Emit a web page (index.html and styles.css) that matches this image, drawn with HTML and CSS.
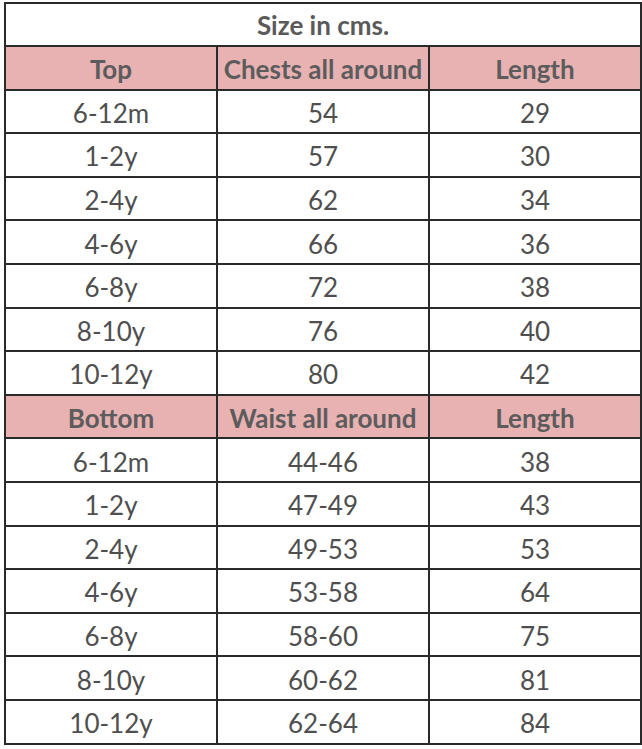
FILE: index.html
```html
<!DOCTYPE html>
<html>
<head>
<meta charset="utf-8">
<link rel="stylesheet" href="styles.css">
</head>
<body>
<table class="size-table">
  <tr class="title-row"><td colspan="3">Size in cms.</td></tr>
  <tr class="head-row"><td>Top</td><td>Chests all around</td><td>Length</td></tr>
  <tr><td>6-12m</td><td>54</td><td>29</td></tr>
  <tr><td>1-2y</td><td>57</td><td>30</td></tr>
  <tr><td>2-4y</td><td>62</td><td>34</td></tr>
  <tr><td>4-6y</td><td>66</td><td>36</td></tr>
  <tr><td>6-8y</td><td>72</td><td>38</td></tr>
  <tr><td>8-10y</td><td>76</td><td>40</td></tr>
  <tr><td>10-12y</td><td>80</td><td>42</td></tr>
  <tr class="head-row"><td>Bottom</td><td>Waist all around</td><td>Length</td></tr>
  <tr><td>6-12m</td><td>44-46</td><td>38</td></tr>
  <tr><td>1-2y</td><td>47-49</td><td>43</td></tr>
  <tr><td>2-4y</td><td>49-53</td><td>53</td></tr>
  <tr><td>4-6y</td><td>53-58</td><td>64</td></tr>
  <tr><td>6-8y</td><td>58-60</td><td>75</td></tr>
  <tr><td>8-10y</td><td>60-62</td><td>81</td></tr>
  <tr><td>10-12y</td><td>62-64</td><td>84</td></tr>
</table>
</body>
</html>
```
FILE: styles.css
```css
html, body {
  margin: 0;
  background: #ffffff;
}
body {
  padding: 2px 0 0 4px;
}
.size-table {
  border-collapse: collapse;
  table-layout: fixed;
  width: 638px;
  font-family: Lato, "Liberation Sans", sans-serif;
  font-size: 26px;
  color: #4f4f4f;
}
.size-table td {
  border: 2px solid #2a2a2a;
  height: 38.6px;
  padding: 3px 0 0 0;
  text-align: center;
  vertical-align: middle;
  width: 33.333%;
  line-height: 1;
}
.title-row td {
  font-weight: bold;
  color: #5a5a5a;
  height: 41px;
  padding-top: 0;
}
.head-row td {
  background: #e8b2b3;
  font-weight: bold;
  color: #5c5c5c;
}
```
